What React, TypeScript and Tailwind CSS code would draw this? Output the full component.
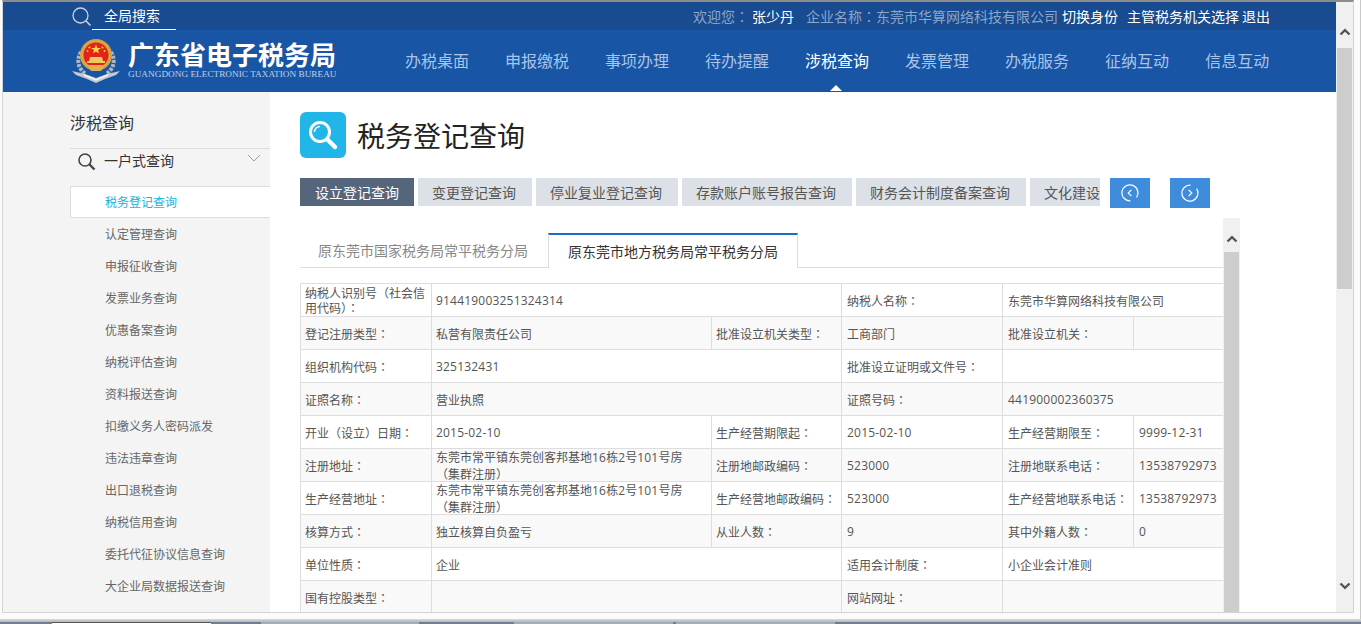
import React from "react";

const navItems = ["办税桌面", "申报缴税", "事项办理", "待办提醒", "涉税查询", "发票管理", "办税服务", "征纳互动", "信息互动"];
const sideItems = ["认定管理查询", "申报征收查询", "发票业务查询", "优惠备案查询", "纳税评估查询", "资料报送查询", "扣缴义务人密码派发", "违法违章查询", "出口退税查询", "纳税信用查询", "委托代征协议信息查询", "大企业局数据报送查询"];
const tabs = ["设立登记查询", "变更登记查询", "停业复业登记查询", "存款账户账号报告查询", "财务会计制度备案查询", "文化建设情况查询"];

function Num({ children }: { children: React.ReactNode }) {
  return <span className="tracking-[0.2px] [font-family:'Open_Sans','Noto_Sans_CJK_SC',sans-serif]">{children}</span>;
}

const Colon = () => <span className="[font-family:'Noto_Sans_CJK_TC',sans-serif]">：</span>;

function Cell({ children, span }: { children?: React.ReactNode; span?: number }) {
  const isLabel = typeof children === "string" && children.endsWith("：");
  return (
    <td colSpan={span} className="border border-[#dddddd] px-[4px] [&:nth-last-child(-n+2)]:pl-[5px] [&:nth-child(4):nth-last-child(3)]:pl-[5px] py-0 text-[12px] leading-[15px] text-[#555555] align-middle overflow-hidden">
      {isLabel ? (
        <>
          {(children as string).slice(0, -1)}
          <Colon />
        </>
      ) : (
        children
      )}
    </td>
  );
}

const Address = () => (
  <span className="block leading-[16px] -my-px">
    东莞市常平镇东莞创客邦基地<Num>16</Num>栋<Num>2</Num>号<Num>101</Num>号房<br />（集群注册）
  </span>
);

function Emblem() {
  return (
    <svg width="48" height="46" viewBox="0 0 48 46">
      <path d="M9 14 C4 22 6 31 14 36" fill="none" stroke="#aeb6bf" strokeWidth="4" strokeDasharray="3 1.2" />
      <path d="M39 14 C44 22 42 31 34 36" fill="none" stroke="#aeb6bf" strokeWidth="4" strokeDasharray="3 1.2" />
      <path d="M0 33 L13 36 L24 40 L35 36 L48 33 L44 37 L33 41 L24 45 L15 41 L4 37 Z" fill="#c3c9d0" />
      <path d="M12 37 L24 42 L36 37" fill="none" stroke="#f2f4f6" strokeWidth="1.5" />
      <circle cx="24" cy="17" r="16" fill="#d9a441" />
      <circle cx="24" cy="17" r="12.5" fill="#e2231a" />
      <path d="M16 27 L32 27 L29 33 L19 33 Z" fill="#e0b050" />
      <polygon points="24,6.5 25.3,10 29,10 26,12.2 27.2,15.6 24,13.5 20.8,15.6 22,12.2 19,10 22.7,10" fill="#f7d44c" />
      <circle cx="17.5" cy="9.5" r="1" fill="#f7d44c" />
      <circle cx="30.5" cy="9.5" r="1" fill="#f7d44c" />
      <circle cx="15.5" cy="13" r="0.9" fill="#f7d44c" />
      <circle cx="32.5" cy="13" r="0.9" fill="#f7d44c" />
      <path d="M17 23 L18 19 L30 19 L31 23 Z" fill="#f0c860" />
      <rect x="15" y="23" width="18" height="2" fill="#f0c860" />
    </svg>
  );
}

function ScrollArrow({ down }: { down?: boolean }) {
  return (
    <svg width="12" height="8" viewBox="0 0 12 8" className="shrink-0">
      <path d={down ? "M1.5 1.5 L6 5.8 L10.5 1.5" : "M1.5 6.5 L6 2.2 L10.5 6.5"} fill="none" stroke="#555555" strokeWidth="2.4" />
    </svg>
  );
}

function CircleBtn({ right }: { right?: boolean }) {
  return (
    <button className="w-[40px] h-[30px] bg-[#3f8bdc] flex items-center justify-center shrink-0">
      <svg width="18" height="18" viewBox="0 0 18 18">
        <path d="M12.5 2 A8 8 0 1 1 5.5 2" transform={right ? "rotate(30 9 9)" : "rotate(150 9 9)"} fill="none" stroke="#ffffff" strokeWidth="1.2" />
        <path d={right ? "M7.6 5.8 L10.8 9 L7.6 12.2" : "M10.4 5.8 L7.2 9 L10.4 12.2"} fill="none" stroke="#ffffff" strokeWidth="1.2" />
      </svg>
    </button>
  );
}

export default function App() {
  return (
    <div className="w-[1361px] h-[624px] overflow-hidden flex flex-col bg-[#fbfbfb] [font-family:'Noto_Sans_CJK_SC',sans-serif]">
      <div className="h-[619px] flex pl-[2px] border-r border-[#c8c8c8]">
        <div className="w-[1352px] h-[613px] flex border-l border-r border-b border-t-2 border-l-[#d4d4d4] border-r-[#d4d4d4] border-b-[#d4d4d4] border-t-[#8c8c8c] bg-white">
          <div className="w-[1333px] flex flex-col min-h-0">
            {/* top bar */}
            <div className="h-[28px] bg-[#184b8f] flex pl-[68px] pr-[66px] shrink-0">
              <svg width="21" height="21" viewBox="0 0 21 21" className="mt-[5px]">
                <circle cx="9.5" cy="8.5" r="7.5" fill="none" stroke="#c9d3e0" strokeWidth="1.3" />
                <path d="M15 14 L19.5 18.5" stroke="#c9d3e0" strokeWidth="1.6" />
              </svg>
              <div className="h-[28px] w-[84px] border-b border-white pl-[12px] text-[14px] leading-[26px] text-white whitespace-nowrap">全局搜索</div>
              <div className="ml-auto flex text-[14px] leading-[28px] whitespace-nowrap text-white">
                <span className="text-[#8aa6cb]">欢迎您<Colon /></span>
                <span className="ml-[3px]">张少丹</span>
                <span className="ml-[12px] text-[#8aa6cb]">企业名称<Colon />东莞市华算网络科技有限公司</span>
                <span className="ml-[4px]">切换身份</span>
                <span className="ml-[9px]">主管税务机关选择</span>
                <span className="ml-[3px]">退出</span>
              </div>
            </div>
            {/* nav */}
            <div className="h-[62px] bg-[#1955a5] flex items-center pl-[69px] shrink-0">
              <div className="flex items-center w-[264px] shrink-0 gap-[8px] -mt-[1px]">
                <Emblem />
                <div className="w-[208px] flex flex-col -mt-[3px]">
                  <div className="text-[26px] leading-[30px] font-bold text-white whitespace-nowrap">广东省电子税务局</div>
                  <div className="text-[9.25px] leading-[11px] text-[#c0cfe4] whitespace-nowrap [font-family:'Liberation_Serif',serif]">GUANGDONG ELECTRONIC TAXATION BUREAU</div>
                </div>
              </div>
              <div className="ml-[69px] flex gap-[36px] text-[16px] whitespace-nowrap -mt-[2px]">
                {navItems.map((n) => (
                  <div key={n} className={n === "涉税查询" ? "relative text-white" : "text-[#aac4e6]"}>
                    {n}
                    {n === "涉税查询" && (
                      <span className="absolute left-[25px] top-[37px] w-0 h-0 border-x-[6px] border-x-transparent border-b-[6px] border-b-white" />
                    )}
                  </div>
                ))}
              </div>
            </div>
            {/* body */}
            <div className="flex-1 min-h-0 flex overflow-hidden">
              <div className="w-[267px] shrink-0 bg-[#f4f4f4] pl-[67px]">
                <div className="h-[57px] border-b border-[#dddddd] pt-[20px] text-[16px] leading-[20px] text-[#333333]">涉税查询</div>
                <div className="h-[37px] flex items-start text-[14px] leading-[22px] text-[#333333]">
                  <svg width="20" height="20" viewBox="0 0 20 20" className="ml-[7px] mt-[3px]">
                    <circle cx="8" cy="8" r="6" fill="none" stroke="#444444" strokeWidth="1.6" />
                    <path d="M12.5 12.5 L17.5 17.5" stroke="#444444" strokeWidth="2.4" />
                  </svg>
                  <span className="ml-[7px]">一户式查询</span>
                  <svg width="14" height="8" viewBox="0 0 14 8" className="ml-[73px] mt-[5px]">
                    <path d="M1 1 L7 7 L13 1" fill="none" stroke="#a0a0a0" strokeWidth="1" />
                  </svg>
                </div>
                <div className="h-[32px] bg-white border-l border-y border-[#dddddd] pl-[34px] flex items-center text-[12px] text-[#1ab0dc]">税务登记查询</div>
                {sideItems.map((s) => (
                  <div key={s} className="h-[32px] pl-[35px] flex items-center text-[12px] text-[#666666] whitespace-nowrap">{s}</div>
                ))}
              </div>
              <div className="flex-1 min-w-0 flex flex-col pl-[30px] pt-[20px]">
                <div className="flex items-center gap-[11px] h-[46px] shrink-0">
                  <div className="w-[46px] h-[46px] rounded-[6px] bg-[#22b6e8] flex items-center justify-center">
                    <svg width="32" height="32" viewBox="0 0 32 32">
                      <circle cx="13" cy="13" r="9.5" fill="none" stroke="#ffffff" strokeWidth="3" />
                      <path d="M7.5 13 A5.5 5.5 0 0 1 13 7.5" fill="none" stroke="#ffffff" strokeWidth="1.4" />
                      <path d="M21 21 L28 28" stroke="#ffffff" strokeWidth="4.5" strokeLinecap="round" />
                    </svg>
                  </div>
                  <div className="text-[28px] leading-[40px] text-[#222222] whitespace-nowrap">税务登记查询</div>
                </div>
                <div className="mt-[20px] flex items-start shrink-0">
                  <div className="w-[800px] h-[28px] flex gap-[4px] overflow-hidden shrink-0">
                    {tabs.map((t, i) => (
                      <div key={t} className={i === 0 ? "h-[28px] w-[114px] pl-[15px] shrink-0 flex items-center bg-[#55657b] text-white text-[14px] whitespace-nowrap" : "h-[28px] pl-[14px] pr-[16px] shrink-0 flex items-center bg-[#dce0e7] text-[#555555] text-[14px] whitespace-nowrap"}>{t}</div>
                    ))}
                  </div>
                  <div className="ml-[10px] flex gap-[20px]">
                    <CircleBtn />
                    <CircleBtn right />
                  </div>
                </div>
                <div className="mt-[10px] flex-1 min-h-0 flex">
                  <div className="w-[923px] shrink-0 pt-[15px] overflow-hidden">
                    <div className="h-[35px] flex border-b border-[#dddddd] text-[14px] whitespace-nowrap">
                      <div className="w-[248px] h-[34px] flex items-center pl-[18px] text-[#888888]">原东莞市国家税务局常平税务分局</div>
                      <div className="w-[250px] h-[35px] flex items-center justify-center bg-white border-t-2 border-x border-t-[#1a6fc0] border-x-[#dddddd] text-[#333333]">原东莞市地方税务局常平税务分局</div>
                    </div>
                    <table className="mt-[15px] w-[923px] table-fixed border-collapse">
                      <colgroup>
                        <col className="w-[131px]" />
                        <col className="w-[280px]" />
                        <col className="w-[130px]" />
                        <col className="w-[161px]" />
                        <col className="w-[131px]" />
                        <col className="w-[90px]" />
                      </colgroup>
                      <tbody>
                        <tr className="h-[33px] bg-white">
                          <Cell>纳税人识别号（社会信用代码）：</Cell>
                          <Cell span={2}><Num>914419003251324314</Num></Cell>
                          <Cell>纳税人名称：</Cell>
                          <Cell span={2}>东莞市华算网络科技有限公司</Cell>
                        </tr>
                        <tr className="h-[33px] bg-[#f9f9f9]">
                          <Cell>登记注册类型：</Cell>
                          <Cell>私营有限责任公司</Cell>
                          <Cell>批准设立机关类型：</Cell>
                          <Cell>工商部门</Cell>
                          <Cell>批准设立机关：</Cell>
                          <Cell />
                        </tr>
                        <tr className="h-[33px] bg-white">
                          <Cell>组织机构代码：</Cell>
                          <Cell span={2}><Num>325132431</Num></Cell>
                          <Cell>批准设立证明或文件号：</Cell>
                          <Cell span={2} />
                        </tr>
                        <tr className="h-[33px] bg-[#f9f9f9]">
                          <Cell>证照名称：</Cell>
                          <Cell span={2}>营业执照</Cell>
                          <Cell>证照号码：</Cell>
                          <Cell span={2}><Num>441900002360375</Num></Cell>
                        </tr>
                        <tr className="h-[33px] bg-white">
                          <Cell>开业（设立）日期：</Cell>
                          <Cell><Num>2015-02-10</Num></Cell>
                          <Cell>生产经营期限起：</Cell>
                          <Cell><Num>2015-02-10</Num></Cell>
                          <Cell>生产经营期限至：</Cell>
                          <Cell><Num>9999-12-31</Num></Cell>
                        </tr>
                        <tr className="h-[33px] bg-[#f9f9f9]">
                          <Cell>注册地址：</Cell>
                          <Cell><Address /></Cell>
                          <Cell>注册地邮政编码：</Cell>
                          <Cell><Num>523000</Num></Cell>
                          <Cell>注册地联系电话：</Cell>
                          <Cell><Num>13538792973</Num></Cell>
                        </tr>
                        <tr className="h-[33px] bg-white">
                          <Cell>生产经营地址：</Cell>
                          <Cell><Address /></Cell>
                          <Cell>生产经营地邮政编码：</Cell>
                          <Cell><Num>523000</Num></Cell>
                          <Cell>生产经营地联系电话：</Cell>
                          <Cell><Num>13538792973</Num></Cell>
                        </tr>
                        <tr className="h-[33px] bg-[#f9f9f9]">
                          <Cell>核算方式：</Cell>
                          <Cell>独立核算自负盈亏</Cell>
                          <Cell>从业人数：</Cell>
                          <Cell><Num>9</Num></Cell>
                          <Cell>其中外籍人数：</Cell>
                          <Cell><Num>0</Num></Cell>
                        </tr>
                        <tr className="h-[33px] bg-white">
                          <Cell>单位性质：</Cell>
                          <Cell span={2}>企业</Cell>
                          <Cell>适用会计制度：</Cell>
                          <Cell span={2}>小企业会计准则</Cell>
                        </tr>
                        <tr className="h-[33px] bg-[#f9f9f9]">
                          <Cell>国有控股类型：</Cell>
                          <Cell span={2} />
                          <Cell>网站网址：</Cell>
                          <Cell span={2} />
                        </tr>
                      </tbody>
                    </table>
                  </div>
                  <div className="w-[17px] shrink-0 bg-[#f0f0f0] flex flex-col items-center">
                    <div className="h-[34px] pt-[17px] flex justify-center shrink-0"><ScrollArrow /></div>
                    <div className="w-[15px] flex-1 bg-[#cdcdcd]" />
                  </div>
                </div>
              </div>
            </div>
          </div>
          {/* page scrollbar */}
          <div className="w-[17px] shrink-0 bg-[#f0f0f0] flex flex-col items-center">
            <div className="h-[46px] pt-[26px] flex justify-center shrink-0"><ScrollArrow /></div>
            <div className="w-[15px] h-[241px] bg-[#cdcdcd] shrink-0" />
            <div className="flex-1" />
            <div className="h-[32px] flex justify-center shrink-0 pt-[2px]"><ScrollArrow down /></div>
          </div>
        </div>
      </div>
      <div className="h-[3px] bg-gradient-to-b from-[#dcdcdc] to-[#b4b4b4] shrink-0" />
      <div className="h-[2px] flex shrink-0 bg-[#6d7f92]">
        <div className="w-[52px]" />
        <div className="w-[159px] bg-white border-t border-[#555555]" />
        <div className="w-[50px]" />
        <div className="w-[158px] bg-[#a3aeb9]" />
        <div className="w-[95px]" />
        <div className="w-[159px] bg-[#a3aeb9]" />
        <div className="w-[3px]" />
        <div className="w-[159px] bg-[#a3aeb9]" />
      </div>
    </div>
  );
}
